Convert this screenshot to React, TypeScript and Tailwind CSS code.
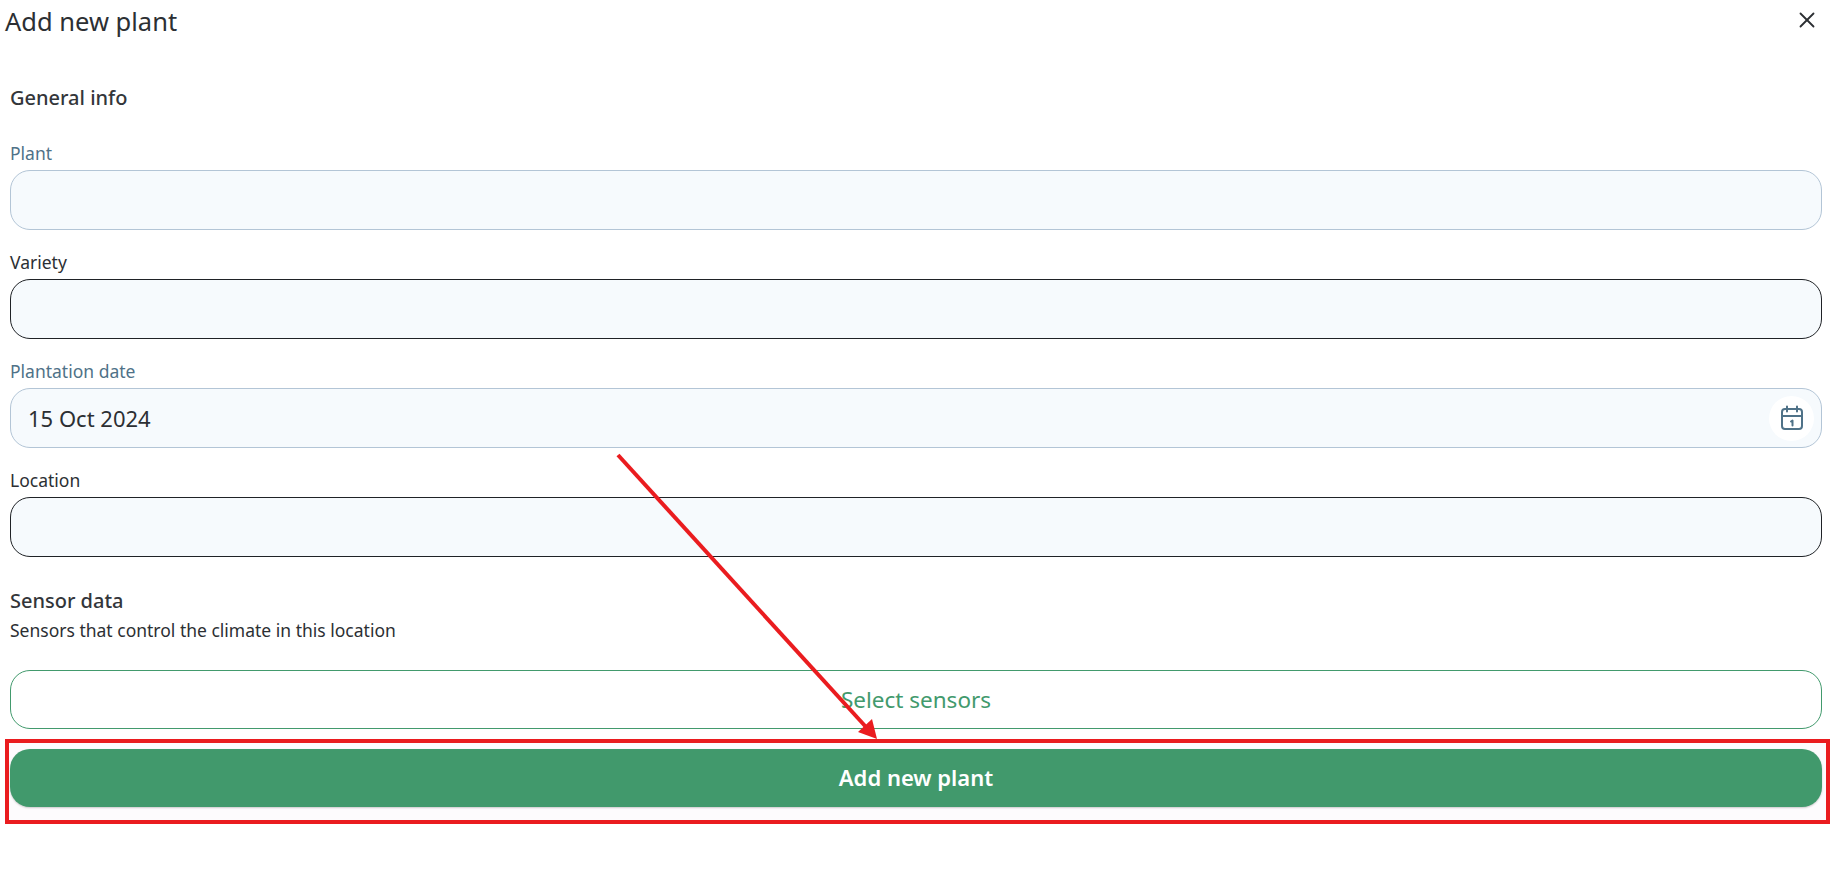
import { X } from "lucide-react";

function Field({ label, active, children }: { label: string; active?: boolean; children?: React.ReactNode }) {
  return (
    <div className="flex flex-col">
      <label className={`h-[24px] mb-[5px] text-[17.5px] leading-[24px] ${active ? "text-[#4f7288]" : "text-[#2c2f33]"}`}>{label}</label>
      <div
        className={`h-[60px] rounded-[20px] border bg-[#f6fafd] flex items-center justify-between pl-[17px] pr-[7px] ${
          active ? "border-[#b3c5d6]" : "border-[#1f2226]"
        }`}
      >
        {children}
      </div>
    </div>
  );
}

function CalendarIcon() {
  return (
    <svg width="24" height="26" viewBox="0 0 24 26" fill="none" stroke="#4f7288" strokeWidth="2" strokeLinecap="round" strokeLinejoin="round">
      <rect x="2" y="4" width="20" height="20" rx="3" />
      <path d="M2 11h20M7 1.5v5M17 1.5v5" />
      <path d="M11 16.5l1.5-1v5" />
    </svg>
  );
}

export default function App() {
  return (
    <div className="relative h-[887px] bg-white overflow-hidden font-['Noto_Sans',sans-serif] text-[#2c2f33]">
      <div className="flex items-center justify-between h-[42px] pl-[5px] pr-[13px]">
        <h1 className="text-[25.5px] leading-[42px]">Add new plant</h1>
        <X size={26} strokeWidth={1.7} className="mb-[2px] text-[#2c2f33]" />
      </div>

      <div className="flex flex-col px-[10px] pr-[11px] pt-[42px]">
        <h2 className="text-[20px] leading-[28px] font-medium text-[#33363a]">General info</h2>
        <div className="flex flex-col gap-[20px] mt-[29px]">
          <Field label="Plant" active />
          <Field label="Variety" />
          <Field label="Plantation date" active>
            <span className="text-[22px]">15 Oct 2024</span>
            <span className="w-[45px] h-[45px] rounded-full bg-white flex items-center justify-center">
              <CalendarIcon />
            </span>
          </Field>
          <Field label="Location" />
        </div>

        <h2 className="text-[20px] leading-[28px] font-medium text-[#33363a] mt-[30px]">Sensor data</h2>
        <p className="text-[17.5px] leading-[24px] mt-[3px]">Sensors that control the climate in this location</p>

        <button className="mt-[28px] h-[59px] rounded-[20px] border border-[#429a6d] bg-white text-[#429a6d] text-[22.5px]">
          Select sensors
        </button>
        <button className="relative z-10 mt-[20px] h-[58px] pb-[1px] rounded-[20px] bg-[#41996c] text-white text-[22px] font-semibold shadow-[0_1px_2px_rgba(0,0,0,0.2)]">
          Add new plant
        </button>
      </div>

      {/* annotation overlay */}
      <div className="absolute left-[5px] top-[739px] w-[1825px] h-[85px] border-[4px] border-[#ea1c1f] bg-[#fdfbfd]" />
      <svg className="absolute left-0 top-0 z-20" width="1833" height="887" fill="none">
        <line x1="618" y1="455" x2="866" y2="727" stroke="#ea1c1f" strokeWidth="4" />
        <polygon points="877,739 858,732 872,719" fill="#ea1c1f" />
      </svg>
    </div>
  );
}
